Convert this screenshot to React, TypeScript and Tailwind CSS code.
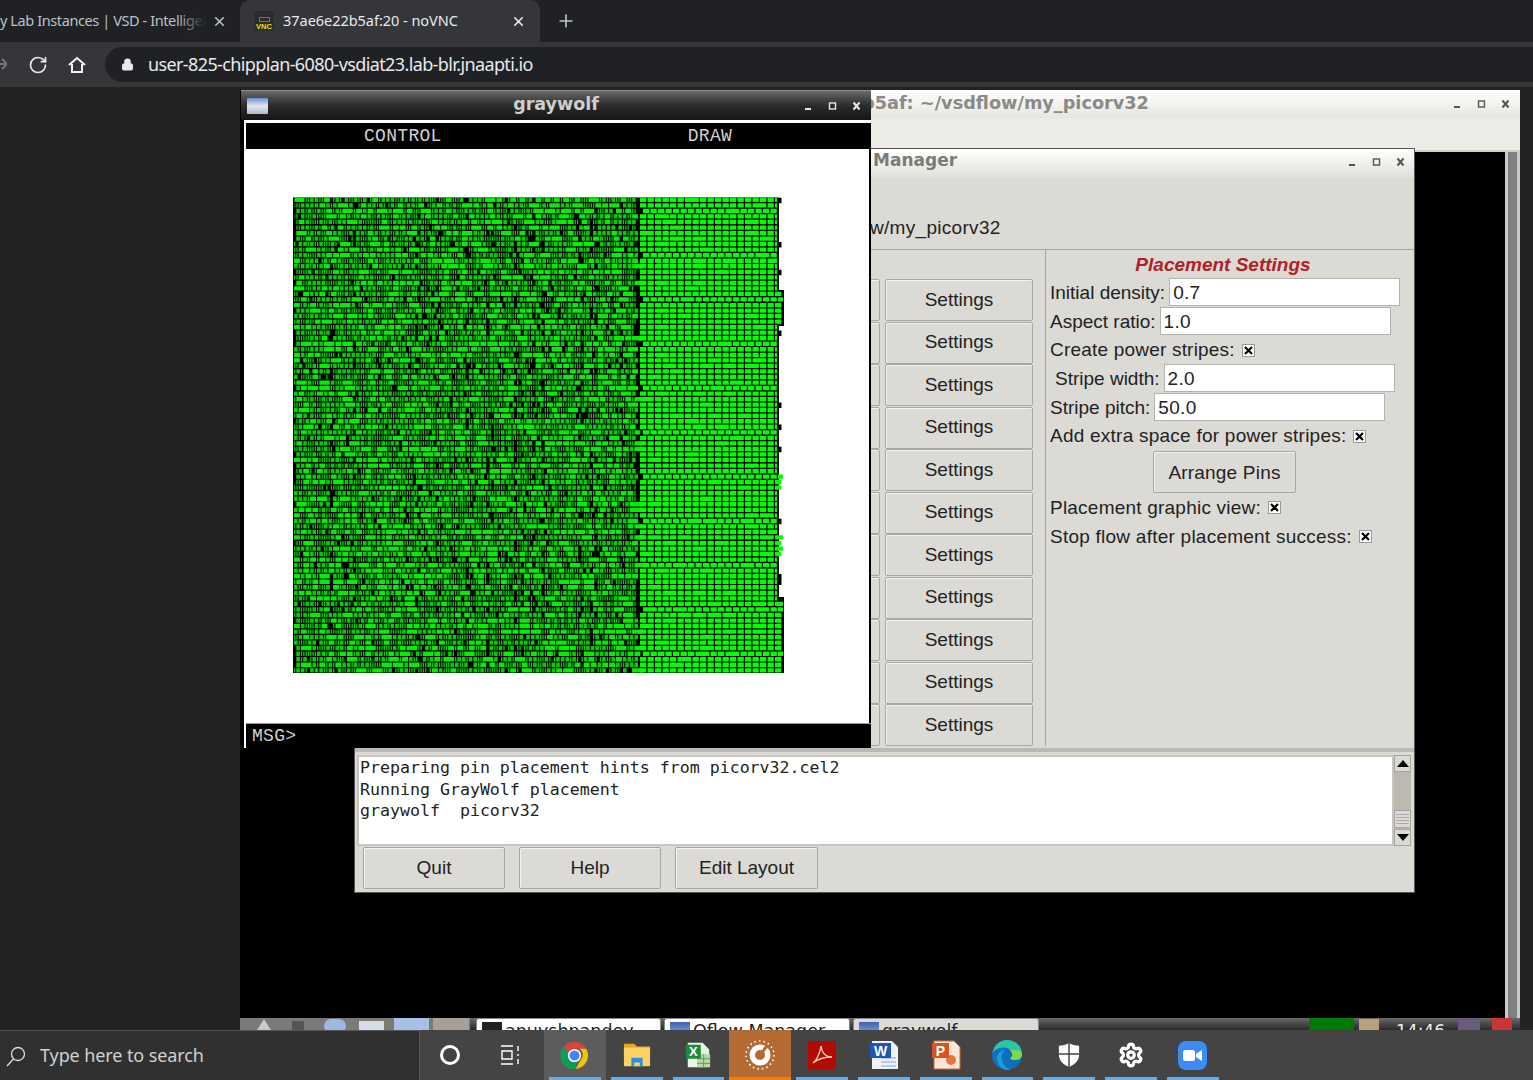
import { Lock, Plus, RotateCw, Settings, X } from 'lucide-react';

// seeded random so the placement picture stays the same on each load
function makeRandom(seed: number) {
  let s = seed;
  return () => {
    s = (s * 16807) % 2147483647;
    return (s - 1) / 2147483646;
  };
}

const ROWS = 86;
const ROW_H = 476 / ROWS;
const LEFT_W = 344;
const CHIP_W = 491;
const SLOT = 2.3;

function buildCells() {
  const rand = makeRandom(4242);
  let narrow = '';
  let wide = '';
  let right = '';
  let notches = '';
  // some columns are emptier than others, which gives the vertical streaks
  const slots = Math.ceil(LEFT_W / SLOT);
  const streak = Array.from({ length: slots }, () => (rand() < 0.18 ? 0.3 : 0.05));
  for (let r = 0; r < ROWS; r++) {
    const y = r * ROW_H + 0.7;
    const h = ROW_H - 1.2;
    let slot = 0;
    while (slot < slots - 1) {
      if (rand() < streak[slot]) {
        slot += 1;
        continue;
      }
      const n = rand();
      const span = n < 0.5 ? 1 : n < 0.83 ? 2 : n < 0.95 ? 3 : 5;
      const w = span * SLOT - 1;
      const cell = `M${(slot * SLOT + 1).toFixed(1)} ${y.toFixed(1)}h${w.toFixed(1)}v${h.toFixed(1)}h-${w.toFixed(1)}z`;
      if (span < 3) narrow += cell;
      else wide += cell;
      slot += span;
    }
    const py = y + 197;
    const isWide = (py > 290 && py < 325) || (py > 470 && py < 490) || (py > 535 && py < 553) || py > 597;
    const end = isWide ? 490 : 484;
    let x = r % 8 === 2 ? 350 : 347;
    while (x < end) {
      const w = Math.min(rand() < 0.07 ? 13.8 : 6.3, end - x);
      if (w > 0.5) right += `M${x.toFixed(1)} ${y.toFixed(1)}h${w.toFixed(1)}v${h.toFixed(1)}h-${w.toFixed(1)}z`;
      x += w + 1.2;
    }
    if (!isWide && rand() < 0.14) notches += `M486 ${y.toFixed(1)}h2.500v${ROW_H.toFixed(1)}h-2.500z`;
  }
  return { narrow, wide, right, notches };
}

const cells = buildCells();

function ChipPlot() {
  return (
    <svg width={CHIP_W} height={476} viewBox={`0 0 ${CHIP_W} 476`} className="block">
      <rect x="0" y="0" width="486" height="476" fill="#000" />
      <rect x="486" y="93" width="5" height="36" fill="#000" />
      <rect x="486" y="400" width="5" height="76" fill="#000" />
      <path d={cells.notches} fill="#000" />
      <path d={cells.narrow} fill="#00d000" />
      <path d={cells.wide} fill="#00f000" />
      <path d={cells.right} fill="#00ff00" />
      <rect x="0" y="0" width="1.5" height="28" fill="#000" />
      <rect x="0" y="0" width="486" height="1" fill="#777" />
    </svg>
  );
}

function WinButtons({ light }: { light?: boolean }) {
  const c = light ? '#e8e8e8' : '#555';
  return (
    <div className="flex items-center gap-[14px]">
      <svg width="10" height="10" viewBox="0 0 10 10">
        <rect x="1" y="7" width="6" height="2" fill={c} />
      </svg>
      <svg width="10" height="10" viewBox="0 0 10 10">
        <rect x="1.5" y="2" width="6" height="6" fill="none" stroke={c} strokeWidth="1.4" />
      </svg>
      <svg width="10" height="10" viewBox="0 0 10 10">
        <path d="M1.5 1.5l6 7M7.5 1.5l-6 7" stroke={c} strokeWidth="2" />
      </svg>
    </div>
  );
}

function GtkButton({ label, className }: { label: string; className: string }) {
  return (
    <div className={`flex items-center justify-center rounded-[2px] border border-[#a9a7a2] bg-[#dcdad5] shadow-[inset_1px_1px_0_#f3f2ef] text-[19px] text-[#222] ${className}`}>
      {label}
    </div>
  );
}

function Check() {
  return (
    <span className="ml-[7px] mt-[1px] inline-flex h-[13px] w-[13px] items-center justify-center border border-[#999] bg-white">
      <svg width="9" height="9" viewBox="0 0 9 9">
        <path d="M1 1l7 7M8 1l-7 7" stroke="#000" strokeWidth="2.2" />
      </svg>
    </span>
  );
}

function FormInput({ value }: { value: string }) {
  return (
    <div className="ml-[4px] flex h-[28px] w-[231px] items-center border border-[#b5b3ae] bg-white pl-[3px] text-[19px] tracking-[0.3px]">
      {value}
    </div>
  );
}

function PlacementPanel() {
  return (
    <div className="flex flex-col pl-[4px] text-[19px] leading-none text-[#222]">
      <div className="flex h-[28px] w-[346px] items-center justify-center font-bold italic text-[#b3202a]">Placement Settings</div>
      <div className="flex h-[28.7px] items-center">
        Initial density:
        <FormInput value="0.7" />
      </div>
      <div className="flex h-[28.7px] items-center">
        Aspect ratio:
        <FormInput value="1.0" />
      </div>
      <div className="flex h-[28.7px] items-center tracking-[0.2px]">
        Create power stripes:
        <Check />
      </div>
      <div className="flex h-[28.7px] items-center pl-[5px]">
        Stripe width:
        <FormInput value="2.0" />
      </div>
      <div className="flex h-[28.7px] items-center">
        Stripe pitch:
        <FormInput value="50.0" />
      </div>
      <div className="flex h-[28.7px] items-center tracking-[0.24px]">
        Add extra space for power stripes:
        <Check />
      </div>
      <div className="flex h-[43px] items-start pl-[103px] pt-[1px]">
        <GtkButton label="Arrange Pins" className="h-[42px] w-[143px] tracking-[0.2px]" />
      </div>
      <div className="flex h-[28.7px] items-center tracking-[0.22px]">
        Placement graphic view:
        <Check />
      </div>
      <div className="flex h-[28.7px] items-center tracking-[0.24px]">
        Stop flow after placement success:
        <Check />
      </div>
    </div>
  );
}

function LogScrollbar() {
  return (
    <div className="flex h-[91px] w-[17px] flex-col bg-[#bdb8b0]">
      <div className="flex h-[17px] items-center justify-center border border-[#a5a39e] bg-[#dcdad5]">
        <div className="h-0 w-0 border-x-[6px] border-b-[7px] border-x-transparent border-b-black" />
      </div>
      <div className="flex-1" />
      <div className="flex h-[18px] flex-col justify-center gap-[2px] border border-[#a5a39e] bg-[#dcdad5] px-[1px]">
        <div className="h-px bg-[#aaa]" />
        <div className="h-px bg-[#aaa]" />
        <div className="h-px bg-[#aaa]" />
        <div className="h-px bg-[#aaa]" />
      </div>
      <div className="mt-[1px] flex h-[17px] items-center justify-center border border-[#a5a39e] bg-[#dcdad5]">
        <div className="h-0 w-0 border-x-[6px] border-t-[7px] border-x-transparent border-t-black" />
      </div>
    </div>
  );
}

function FlowManager() {
  const rows = Array.from({ length: 11 });
  return (
    <div className="absolute left-[114px] top-[58px] z-10 flex h-[745px] w-[1061px] flex-col border border-[#555] bg-[#dcdad5] font-['Liberation_Sans',sans-serif]">
      <div className="flex h-[29px] shrink-0 items-center justify-between bg-gradient-to-b from-[#ffffff] to-[#dfe0d8] pb-[4px] pl-[518px] pr-[8px]">
        <span className="mb-[2px] font-['DejaVu_Sans',sans-serif] text-[17px] font-bold text-[#7b7b78]">Manager</span>
        <WinButtons />
      </div>
      <div className="flex h-[72px] shrink-0 items-end border-b border-[#a8a6a1] pb-[7px] pl-[515px] text-[19px] tracking-[0.3px] text-[#222]">
        w/my_picorv32
      </div>
      <div className="flex h-[496px] shrink-0">
        <div className="flex w-[691px] shrink-0 justify-end border-r border-[#a8a6a1] pr-[12px] pt-[29px]">
          <div className="flex flex-col gap-[0.5px]">
            {rows.map((_, i) => (
              <div key={i} className="flex h-[42px] gap-[5px]">
                <GtkButton label="" className="h-[42px] w-[60px]" />
                <GtkButton label="Settings" className="h-[42px] w-[148px]" />
              </div>
            ))}
          </div>
        </div>
        <PlacementPanel />
      </div>
      <div className="flex h-[100px] shrink-0 flex-col">
        <div className="mt-[2px] h-[4px] shrink-0 bg-[#b9b9b5]" />
        <div className="mt-[3px] flex pl-[2px] pr-[3px]">
          <div className="h-[91px] flex-1 border-2 border-[#c8c6c1] bg-white pl-[1px] font-['DejaVu_Sans_Mono',monospace] text-[16.6px] leading-[21.6px] whitespace-pre text-[#222]">
            <div>Preparing pin placement hints from picorv32.cel2</div>
            <div>Running GrayWolf placement</div>
            <div>graywolf  picorv32</div>
          </div>
          <LogScrollbar />
        </div>
      </div>
      <div className="flex gap-[14px] pl-[8px] pt-[1px]">
        <GtkButton label="Quit" className="h-[42px] w-[142px]" />
        <GtkButton label="Help" className="h-[42px] w-[142px]" />
        <GtkButton label="Edit Layout" className="h-[42px] w-[143px]" />
      </div>
    </div>
  );
}

function Graywolf() {
  return (
    <div className="absolute left-[1px] top-0 z-20 flex h-[658px] w-[630px] flex-col border-t border-[#8a8a8a] bg-black pl-[3px] font-['Liberation_Mono',monospace]">
      <div className="-ml-[3px] flex h-[29px] shrink-0 items-center justify-between bg-gradient-to-b from-[#6a6a6a] via-[#2c2c2c] to-[#151515] pl-[6px] pr-[9px]">
        <div className="h-[16px] w-[21px] rounded-[1px] bg-gradient-to-b from-[#6b8fd0] via-[#e4e8ef] to-[#aeb8cc]" />
        <span className="mb-[3px] pl-[40px] font-['DejaVu_Sans',sans-serif] text-[17.5px] font-bold text-[#cfcfcf]">graywolf</span>
        <WinButtons light />
      </div>
      <div className="flex flex-1 flex-col border-l-[2px] border-t-[3px] border-white">
        <div className="flex h-[26px] shrink-0 items-center bg-black pl-[118px] text-[18px] tracking-[0.3px] text-[#d0d0d0]">
          <span>CONTROL</span>
          <span className="pl-[246px]">DRAW</span>
        </div>
        <div className="mr-[2px] flex-1 bg-white pl-[47px] pt-[48px]">
          <ChipPlot />
        </div>
        <div className="flex h-[25px] shrink-0 items-center border-t border-[#999] bg-black pl-[6px] text-[18px] tracking-[0.3px] text-[#d0d0d0]">MSG&gt;</div>
      </div>
    </div>
  );
}

function BackTerminal() {
  return (
    <div className="absolute inset-y-0 left-[560px] right-0 flex flex-col bg-black">
      <div className="flex h-[28px] shrink-0 items-center justify-between bg-gradient-to-b from-[#ffffff] to-[#e6e6df] pl-[62px] pr-[9px]">
        <span className="mb-[2px] font-['DejaVu_Sans',sans-serif] text-[17.7px] font-bold text-[#8a8a86]">b5af: ~/vsdflow/my_picorv32</span>
        <WinButtons />
      </div>
      <div className="h-[32px] shrink-0 bg-[#edebe6]" />
      <div className="flex flex-1 justify-end border-t-2 border-[#cfcdc8]">
        <div className="flex w-[15px] justify-center bg-[#c9c9c9] px-[3px]">
          <div className="w-full bg-[#808080]" />
        </div>
      </div>
    </div>
  );
}

function VncTaskTab({ label, icon, className }: { label: string; icon: string; className: string }) {
  return (
    <div className={`flex h-[30px] items-start gap-[3px] rounded-t-[3px] border border-[#888] px-[5px] pt-[1px] font-['DejaVu_Sans',sans-serif] text-[17.5px] leading-[22px] text-[#222] ${className}`}>
      <div className={`mt-[2px] h-[16px] w-[20px] shrink-0 ${icon}`} />
      <span className="whitespace-nowrap">{label}</span>
    </div>
  );
}

function VncTaskbar() {
  return (
    <div className="relative z-30 flex h-[12px] shrink-0 items-start overflow-hidden bg-gradient-to-b from-[#6a6a6a] to-[#2a2a2a]">
      <div className="flex h-[30px] w-[230px] shrink-0 bg-[#7a7a78]">
        <div className="ml-[14px] mt-[1px] h-0 w-0 border-x-[10px] border-b-[16px] border-x-transparent border-b-[#c9c9c9]" />
        <div className="ml-[18px] mt-[3px] h-[12px] w-[12px] bg-[#555]" />
        <div className="ml-[20px] mt-[1px] h-[14px] w-[22px] rounded-full bg-[#9db9e0]" />
        <div className="ml-[13px] mt-[3px] h-[12px] w-[25px] bg-[#d5dde9]" />
        <div className="ml-[10px] h-[14px] w-[35px] bg-[#a6c0e6]" />
        <div className="ml-[4px] h-[14px] w-[36px] bg-[#a89f98]" />
      </div>
      <div className="ml-[6px] flex gap-[3px]">
        <VncTaskTab label="anuvshpandey" icon="bg-[#222]" className="w-[185px] bg-white" />
        <VncTaskTab label="Oflow Manager" icon="bg-gradient-to-b from-[#3d62b4] to-[#9fb3dc]" className="w-[186px] bg-white" />
        <VncTaskTab label="graywolf" icon="bg-gradient-to-b from-[#3d62b4] to-[#9fb3dc]" className="w-[186px] bg-[#dcdad5]" />
      </div>
      <div className="ml-auto flex items-start">
        <div className="h-[14px] w-[45px] bg-[#007a00]" />
        <div className="ml-[5px] mt-[1px] h-[14px] w-[20px] bg-[#b8a27c]" />
        <span className="ml-[17px] mt-[2px] font-['DejaVu_Sans',sans-serif] text-[17px] leading-[22px] text-[#eee]">14:46</span>
        <div className="ml-[13px] h-[14px] w-[22px] bg-[#6a5a80]" />
        <div className="ml-[12px] mr-[8px] h-[14px] w-[20px] bg-[#c8363c]" />
      </div>
    </div>
  );
}

function ChromeIcon() {
  return (
    <svg width="29" height="29" viewBox="0 0 30 30">
      <path d="M15 1a14 14 0 0 1 12.1 7H15a7 7 0 0 0-6.5 4.4L4.2 5.4A14 14 0 0 1 15 1z" fill="#db4437" />
      <path d="M27.1 8A14 14 0 0 1 16 29l6-10.5A7 7 0 0 0 20 8z" fill="#f4c20d" />
      <path d="M4.2 5.4l6 10.6a7 7 0 0 0 7.6 4.4L16 29A14 14 0 0 1 4.2 5.4z" fill="#0f9d58" />
      <circle cx="15" cy="15" r="6.8" fill="#fff" />
      <circle cx="15" cy="15" r="5.3" fill="#4285f4" />
    </svg>
  );
}

function FolderIcon() {
  return (
    <svg width="28" height="28" viewBox="0 0 30 30">
      <path d="M1 3h11l3 3h14v7H1z" fill="#e3a727" />
      <path d="M1 7h28v20H1z" fill="#fad165" />
      <rect x="9" y="18" width="12" height="9" fill="#2d8fe0" />
      <rect x="12" y="23" width="6" height="4" fill="#fad165" />
    </svg>
  );
}

function ExcelIcon() {
  return (
    <svg width="28" height="28" viewBox="0 0 30 30">
      <path d="M4 2h16l7 7v19H4z" fill="#eaf5e4" />
      <path d="M14 14h14v14H14z" fill="#b7d9a6" />
      <path d="M14 19h14M14 24h14M21 14v14" stroke="#5d9e4f" strokeWidth="1" />
      <path d="M2 4h16v15H2z" fill="#1f8a3f" />
      <text x="10" y="16" textAnchor="middle" fontFamily="Liberation Sans" fontWeight="700" fontSize="14" fill="#fff">X</text>
    </svg>
  );
}

function OrangeAppIcon() {
  return (
    <svg width="30" height="30" viewBox="0 0 30 30">
      <circle cx="15" cy="15" r="10.500" fill="#fff" />
      <circle cx="15" cy="15" r="5" fill="#b36b33" />
      <path d="M15 15l7-9" stroke="#b36b33" strokeWidth="3" />
      <circle cx="15" cy="15" r="14" fill="none" stroke="#fff" strokeWidth="1.6" strokeDasharray="1.6 3" />
    </svg>
  );
}

function AcrobatIcon() {
  return (
    <svg width="30" height="30" viewBox="0 0 30 30">
      <rect x="1" y="1" width="28" height="28" fill="#b30b00" />
      <path d="M6 23c3-2 7-9 8-17 1 7 5 11 11 11-6 0-13 1-19 6z" fill="none" stroke="#f6c9c4" strokeWidth="1.4" />
    </svg>
  );
}

function WordIcon() {
  return (
    <svg width="30" height="30" viewBox="0 0 30 30">
      <path d="M3 1h20l6 6v22H3z" fill="#eef3fb" />
      <path d="M12 18h15M12 22h15M12 26h15" stroke="#7fa2dc" strokeWidth="1.2" />
      <path d="M1 3h21v15H1z" fill="#1f56b5" />
      <text x="11.5" y="15.5" textAnchor="middle" fontFamily="Liberation Sans" fontWeight="700" fontSize="14" fill="#fff">W</text>
    </svg>
  );
}

function PowerPointIcon() {
  return (
    <svg width="30" height="30" viewBox="0 0 30 30">
      <path d="M3 1h20l6 6v22H3z" fill="#fbe6da" stroke="#d9662c" />
      <circle cx="20" cy="20" r="5" fill="#e8743b" />
      <path d="M1 3h17v15H1z" fill="#d9541e" />
      <text x="9.5" y="15.5" textAnchor="middle" fontFamily="Liberation Sans" fontWeight="700" fontSize="14" fill="#fff">P</text>
    </svg>
  );
}

function EdgeIcon() {
  return (
    <svg width="32" height="32" viewBox="0 0 32 32">
      <circle cx="16" cy="16" r="15" fill="#0f6fbd" />
      <path d="M1.5 14C3 6 9 1 16 1c8 0 15 6 15 14 0 4-3 6-7 6-3 0-5-1-5-2 3-1 3-5 0-8-4-4-13-3-17.500 3z" fill="#2ec5a6" />
      <path d="M20 31c-7 1-13-3-14-10-1-5 3-10 9-10-4 2-5 6-4 10 1 5 5 9 9 10z" fill="#1d9bd8" />
      <path d="M31 15c0 4-3 6-7 6-3 0-5-1-5-2 3-1 3-5 0-8 5-1 11 0 12 4z" fill="#7ad94f" />
    </svg>
  );
}

function ShieldIcon() {
  return (
    <svg width="22" height="26" viewBox="0 0 24 28">
      <path d="M12 1c3 2 7 3 11 3v10c0 6-5 11-11 13C6 25 1 20 1 14V4c4 0 8-1 11-3z" fill="#fff" />
      <path d="M12 1v26M1 13h22" stroke="#444" strokeWidth="1.6" />
    </svg>
  );
}

function ZoomIcon() {
  return (
    <div className="flex h-[29px] w-[29px] items-center justify-center rounded-[8px] bg-[#3d8cf5]">
      <svg width="19" height="13" viewBox="0 0 19 13">
        <rect x="0" y="1" width="12" height="11" rx="2.500" fill="#fff" />
        <path d="M13 5l6-4v11l-6-4z" fill="#fff" />
      </svg>
    </div>
  );
}

const taskApps = [
  { key: 'chrome', icon: <ChromeIcon />, state: 'hover' },
  { key: 'folder', icon: <FolderIcon />, state: 'open' },
  { key: 'excel', icon: <ExcelIcon />, state: 'open' },
  { key: 'app', icon: <OrangeAppIcon />, state: 'active' },
  { key: 'acrobat', icon: <AcrobatIcon />, state: 'open' },
  { key: 'word', icon: <WordIcon />, state: 'open' },
  { key: 'ppt', icon: <PowerPointIcon />, state: 'open' },
  { key: 'edge', icon: <EdgeIcon />, state: 'open' },
  { key: 'shield', icon: <ShieldIcon />, state: 'open' },
  { key: 'gear', icon: <Settings className="h-[26px] w-[26px] text-white" strokeWidth={3} />, state: 'open' },
  { key: 'zoom', icon: <ZoomIcon />, state: 'open' },
];

function WindowsTaskbar() {
  return (
    <div className="flex h-[50px] shrink-0 bg-[#444444] font-['Noto_Sans',sans-serif]">
      <div className="flex w-[420px] shrink-0 items-center border-r border-t border-[#555] bg-[#303030] pl-[5px] text-[#d0d0d0]">
        <svg width="22" height="22" viewBox="0 0 22 22" fill="none" stroke="#e0e0e0" strokeWidth="1.300">
          <circle cx="13" cy="9" r="6.500" />
          <path d="M8.500 14L2 21" />
        </svg>
        <span className="ml-[13px] text-[18px] tracking-[-0.1px]">Type here to search</span>
      </div>
      <div className="flex w-[60px] items-center justify-center">
        <div className="h-[20px] w-[20px] rounded-full border-[3px] border-white" />
      </div>
      <div className="flex w-[64px] items-center justify-center pr-[4px]">
        <svg width="22" height="22" viewBox="0 0 22 22" fill="none" stroke="#fff" strokeWidth="1.400">
          <path d="M2 2h12M2 20h12M3 7h10v8H3zM19 2v5M19 10v2M19 15v5" />
        </svg>
      </div>
      {taskApps.map((app) => (
        <div
          key={app.key}
          className={`relative flex w-[61.800px] shrink-0 items-center justify-center ${
            app.state === 'hover' ? 'bg-[#5c5c5c]' : app.state === 'active' ? 'bg-[#b36b33]' : ''
          }`}
        >
          {app.icon}
          <div className={`absolute bottom-0 h-[3px] ${app.state === 'active' ? 'inset-x-0 bg-[#f57c00]' : 'inset-x-[5px] bg-[#62aeea]'}`} />
        </div>
      ))}
    </div>
  );
}

function BrowserChrome() {
  return (
    <div className="shrink-0 font-['Noto_Sans',sans-serif]">
      <div className="flex h-[42px] items-end bg-[#202124] text-[#e8eaed]">
        <div className="relative flex h-[42px] w-[240px] shrink-0 items-center text-[#bdc1c6]">
          <span className="w-[206px] overflow-hidden whitespace-nowrap text-[14.500px] tracking-[-0.4px]">y Lab Instances | VSD - Intelligent</span>
          <div className="absolute left-[176px] h-[30px] w-[30px] bg-gradient-to-r from-transparent to-[#202124]" />
          <X className="ml-[6px] h-[15px] w-[15px]" strokeWidth={2.600} />
        </div>
        <div className="flex h-[42px] w-[300px] shrink-0 items-center rounded-t-[10px] bg-[#35363a] pl-[14px] pr-[14px]">
          <div className="flex h-[20px] w-[20px] flex-col items-center justify-end rounded-[3px] bg-[#2b2c2e] pb-[1px] font-['Liberation_Sans',sans-serif] text-[7.500px] leading-none font-bold text-[#e6e600]">
            <span className="mb-[1px] h-[5px] w-[11px] border border-[#1fae1f]" />
            VNC
          </div>
          <span className="ml-[9px] flex-1 whitespace-nowrap text-[14.500px] tracking-[-0.03px]">37ae6e22b5af:20 - noVNC</span>
          <X className="h-[15px] w-[15px]" strokeWidth={2.600} />
        </div>
        <Plus className="mb-[11px] ml-[16px] h-[20px] w-[20px] text-[#bdc1c6]" strokeWidth={2} />
      </div>
      <div className="flex h-[45px] items-start bg-[#35363a] pt-[5px] text-[#e8eaed]">
        <svg width="7" height="16" viewBox="0 0 7 16" className="mt-[9px] text-[#777]" fill="none" stroke="currentColor" strokeWidth="2">
          <path d="M-2 8h8M2 3l5 5-5 5" />
        </svg>
        <RotateCw className="ml-[21px] mt-[8px] h-[20px] w-[20px]" strokeWidth={2} />
        <svg width="20" height="20" viewBox="0 0 20 20" className="ml-[19px] mt-[8px]" fill="none" stroke="#f1f3f4" strokeWidth="2">
          <path d="M2 10l8-7 8 7M5 9v8h10V9" />
        </svg>
        <div className="ml-[18px] flex h-[35px] flex-1 items-center rounded-l-full bg-[#202124] pl-[16px]">
          <Lock className="h-[13px] w-[13px] fill-[#e8eaed] text-[#e8eaed]" strokeWidth={2} />
          <span className="ml-[14px] text-[18px] tracking-[-0.62px]">user-825-chipplan-6080-vsdiat23.lab-blr.jnaapti.io</span>
        </div>
      </div>
    </div>
  );
}

export default function App() {
  return (
    <div className="flex h-[1080px] w-[1533px] flex-col overflow-hidden bg-[#232323]">
      <BrowserChrome />
      <div className="flex min-h-0 flex-1 pt-[3px]">
        <div className="w-[240px] shrink-0" />
        <div className="flex w-[1280px] shrink-0 flex-col bg-black">
          <div className="relative flex-1">
            <BackTerminal />
            <FlowManager />
            <Graywolf />
          </div>
          <VncTaskbar />
        </div>
      </div>
      <WindowsTaskbar />
    </div>
  );
}
